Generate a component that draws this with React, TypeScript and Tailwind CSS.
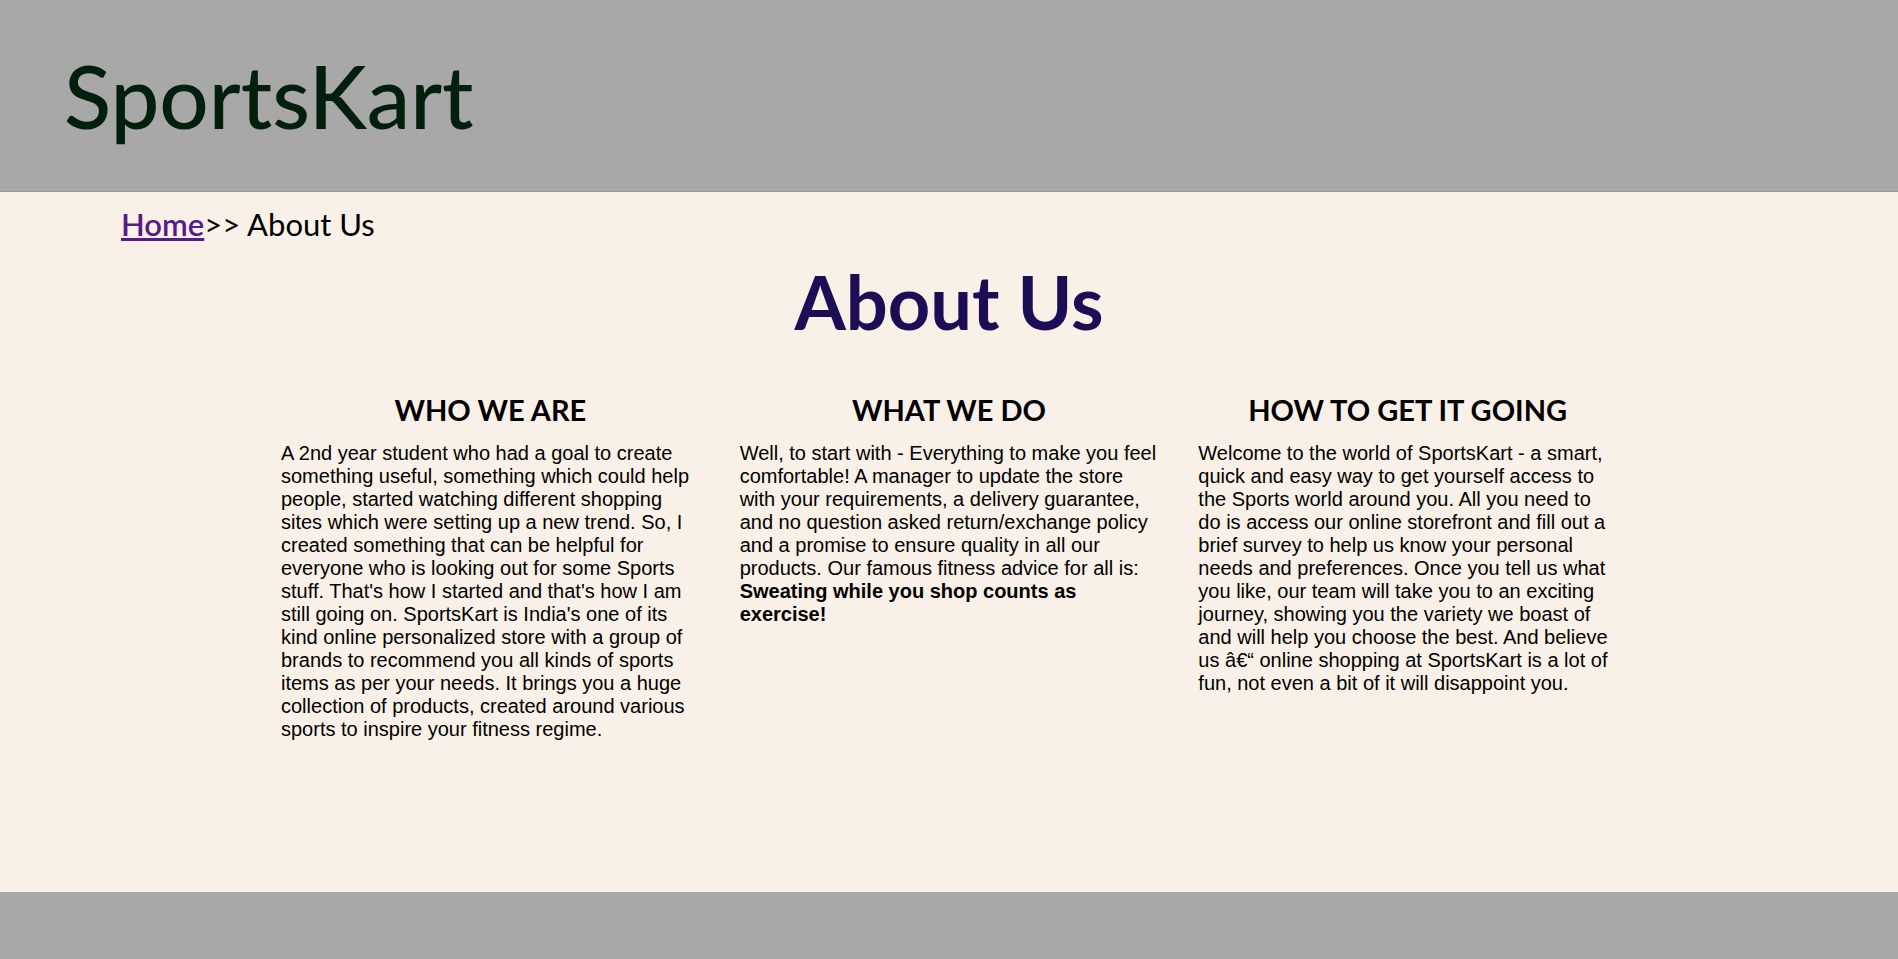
const columns = [
  {
    title: 'WHO WE ARE',
    body: (
      <>
        A 2nd year student who had a goal to create something useful, something which could help people, started
        watching different shopping sites which were setting up a new trend. So, I created something that can be
        helpful for everyone who is looking out for some Sports stuff. That's how I started and that's how I am still
        going on. SportsKart is India's one of its kind online personalized store with a group of brands to recommend
        you all kinds of sports items as per your needs. It brings you a huge collection of products, created around
        various sports to inspire your fitness regime.
      </>
    ),
  },
  {
    title: 'WHAT WE DO',
    body: (
      <>
        Well, to start with - Everything to make you feel comfortable! A manager to update the store with your
        requirements, a delivery guarantee, and no question asked return/exchange policy and a promise to ensure
        quality in all our products. Our famous fitness advice for all is:{' '}
        <b>Sweating while you shop counts as exercise!</b>
      </>
    ),
  },
  {
    title: 'HOW TO GET IT GOING',
    body: (
      <>
        Welcome to the world of SportsKart - a smart, quick and easy way to get yourself access to the Sports world
        around you. All you need to do is access our online storefront and fill out a brief survey to help us know
        your personal needs and preferences. Once you tell us what you like, our team will take you to an exciting
        journey, showing you the variety we boast of and will help you choose the best. And believe us â€“ online
        shopping at SportsKart is a lot of fun, not even a bit of it will disappoint you.
      </>
    ),
  },
];

export default function App() {
  return (
    <div className="flex min-h-screen flex-col bg-[#f9f1e7] font-['Lato',sans-serif]">
      {/* Header */}
      <header className="flex h-[192px] items-center border-b border-[#999999] bg-[#a8a8a8] pl-[64px]">
        <h1 className="text-[87px] font-medium leading-none text-[#011f0c]">SportsKart</h1>
      </header>

      {/* Main */}
      <main className="flex-1">
        <div className="pl-[121px] pt-[14px] text-[31px] leading-[37px] text-black">
          <a href="#" className="font-semibold text-[#551a8b] underline">
            Home
          </a>
          &gt;&gt; About Us
        </div>

        <h2 className="mt-[22px] text-center text-[74px] font-bold leading-none text-[#1c0e55]">About Us</h2>

        <div className="mx-auto mt-[53px] grid w-[1336px] grid-cols-3 gap-x-[40px]">
          {columns.map((col) => (
            <section key={col.title}>
              <h3 className="text-center text-[29px] font-bold leading-[36px] text-black">{col.title}</h3>
              <p className="mt-[14px] font-['Liberation_Sans',Arial,sans-serif] text-[20px] leading-[23px] text-black">
                {col.body}
              </p>
            </section>
          ))}
        </div>
      </main>

      {/* Footer */}
      <footer className="h-[67px] bg-[#a8a8a8]" />
    </div>
  );
}
